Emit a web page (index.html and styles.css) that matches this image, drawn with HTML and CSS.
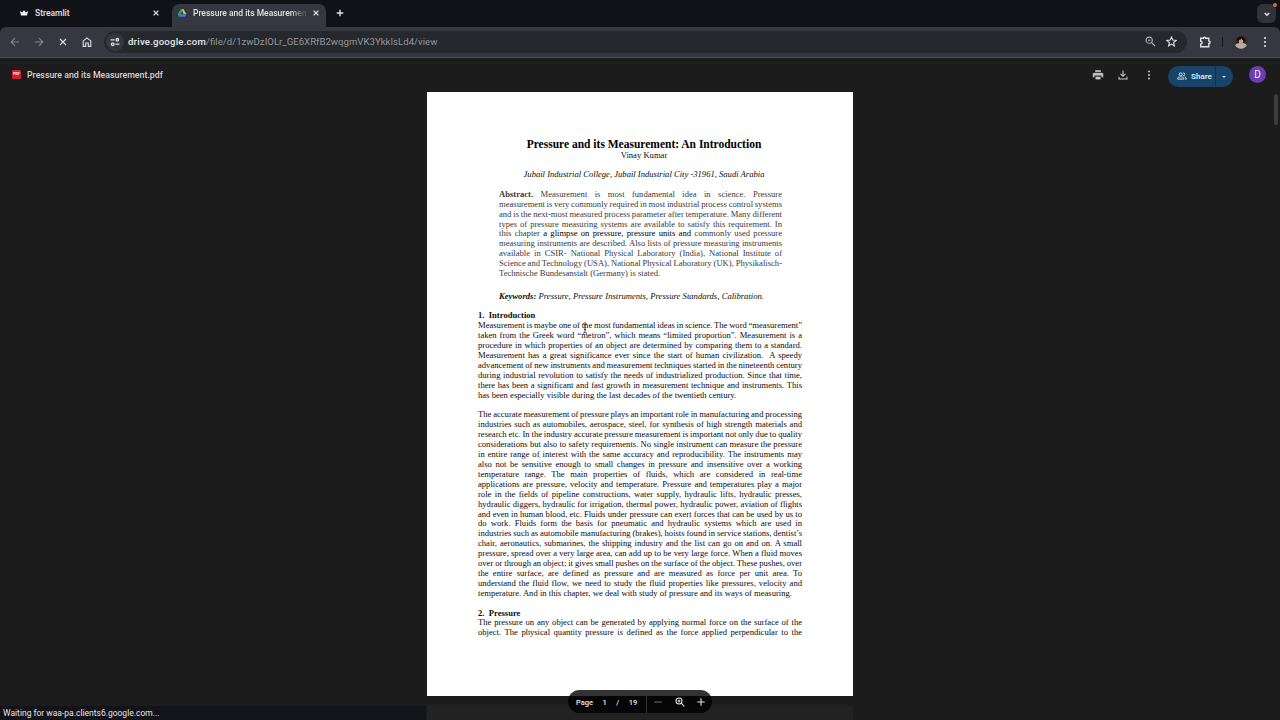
FILE: index.html
```
<!DOCTYPE html>
<html lang="en">
<head>
    <meta charset="UTF-8">
    <meta name="viewport" content="width=device-width, initial-scale=1.0">
    <title>Pressure and its Measurement.pdf</title>
    <link rel="stylesheet" href="styles.css">
</head>
<body>
    <!-- Tabs -->
    <div class="tabs">
        <div class="tab">
            <svg class="favicon" width="10" height="10" viewBox="0 0 10 10"><path d="M1 3l2.3 1.6L5 2l1.7 2.6L9 3 8 7.6H2z" fill="#f4f4f4"/></svg>
            <span class="tab-title">Streamlit</span>
            <svg class="close" width="6" height="6" viewBox="0 0 6 6"><path d="M.6.6l4.8 4.8M5.4.6L.6 5.4"/></svg>
        </div>
        <div class="tab active">
            <svg class="favicon" width="10" height="10" viewBox="0 0 10 10">
                <path d="M3.6 1.3h2.8L3.4 6.4 2 8.8.8 6.4z" fill="#35a26a"/>
                <path d="M4.8 1.3h1.8l2.8 5H6.6z" fill="#e5bd3f"/>
                <path d="M2 8.8l1.5-2.5h5.9L8 8.8z" fill="#3d7fe0"/>
            </svg>
            <span class="tab-title">Pressure and its Measuremen</span>
            <svg class="close" width="6" height="6" viewBox="0 0 6 6"><path d="M.6.6l4.8 4.8M5.4.6L.6 5.4"/></svg>
        </div>
        <svg class="new-tab" width="8" height="8" viewBox="0 0 8 8"><path d="M4 .7v6.6M.7 4h6.6"/></svg>
        <div class="tab-search">
            <svg width="8" height="8" viewBox="0 0 8 8"><path d="M1.8 3L4 5.2 6.2 3"/></svg>
            <i class="dot"></i>
        </div>
    </div>

    <!-- Address bar -->
    <div class="toolbar">
        <div class="nav">
            <svg class="dim" width="10" height="10" viewBox="0 0 10 10"><path d="M9 5H1.4M5 1.2L1.2 5 5 8.8"/></svg>
            <svg class="dim" width="10" height="10" viewBox="0 0 10 10"><path d="M1 5h7.6M5 1.2L8.8 5 5 8.8"/></svg>
            <svg width="10" height="10" viewBox="0 0 10 10"><path d="M2 2l6 6M8 2L2 8"/></svg>
            <svg width="10" height="10" viewBox="0 0 10 10"><path d="M1.2 9.4V3.9L5 .9l3.8 3V9.4H6.3V6H3.7v3.4z"/></svg>
        </div>
        <div class="address">
            <div class="site-info">
                <svg width="10" height="10" viewBox="0 0 10 10"><path d="M.6 2.8h4M5.4 7.2h4"/><circle cx="7.3" cy="2.8" r="1.3"/><circle cx="2.7" cy="7.2" r="1.3"/></svg>
            </div>
            <span class="url"><b>drive.google.com</b>/file/d/1zwDzIOLr_GE6XRfB2wqgmVK3YkkIsLd4/view</span>
            <svg class="zoom-icon" width="11" height="11" viewBox="0 0 11 11"><circle cx="4.2" cy="4.2" r="3.1"/><path d="M6.5 6.5l3.5 3.5M2.9 4.2h2.6"/></svg>
            <svg width="11" height="11" viewBox="0 0 11 11"><path d="M5.5 1l1.3 3.1 3.4.3-2.6 2.2.8 3.3-2.9-1.8-2.9 1.8.8-3.3L.8 4.4l3.4-.3z"/></svg>
        </div>
        <svg class="ext" width="12" height="12" viewBox="0 0 12 12"><path d="M1.7 2.3h2.7a1.1 1.1 0 0 1 2.2 0h3.2v2.6a1.3 1.3 0 0 1 0 2.6v3.3H1.7V8.1a1.4 1.4 0 0 0 0-2.9z"/></svg>
        <i class="sep"></i>
        <svg class="profile" width="14" height="14" viewBox="0 0 14 14">
            <circle cx="7" cy="7" r="6.8" fill="#37302b"/>
            <path d="M1.1 10.2C2.5 8.3 4 8 7 8s4.8.6 5.9 2.3A6.8 6.8 0 0 1 1.1 10.2z" fill="#b9aca5"/>
            <path d="M2.6 6Q3 1.5 7.2 1.5T11.5 6L10 8H4z" fill="#15110f"/>
            <ellipse cx="7" cy="6.5" rx="2.2" ry="2.9" fill="#c79d7f"/>
            <path d="M4.6 5Q7 5 7.3 3.5 8 5 9.5 5.3V3L7 2 4.6 3z" fill="#15110f"/>
        </svg>
        <svg class="menu" width="4" height="12" viewBox="0 0 4 12"><circle cx="2" cy="2" r="1.1"/><circle cx="2" cy="6" r="1.1"/><circle cx="2" cy="10" r="1.1"/></svg>
    </div>

    <!-- Drive viewer -->
    <div class="viewer">
        <div class="viewer-bar">
            <div class="pdf-icon">PDF</div>
            <span class="file-name">Pressure and its Measurement.pdf</span>
            <svg class="print" width="12" height="10" viewBox="0 0 12 10"><path d="M3 0h6v2.2H3zM1.8 2.7h8.4q1.2 0 1.2 1.2v3.5H9.3V5.8H2.7v1.6H.6V3.9q0-1.2 1.2-1.2z"/><path d="M3.3 6.4h5.4v3.2H3.3z"/></svg>
            <svg class="download" width="10" height="10" viewBox="0 0 10 10"><path d="M5 .5v5.6M2.5 3.8L5 6.3l2.5-2.5M1 6.8v2.2h8V6.8"/></svg>
            <svg class="more" width="4" height="10" viewBox="0 0 4 10"><circle cx="2" cy="1.5" r="1"/><circle cx="2" cy="5" r="1"/><circle cx="2" cy="8.5" r="1"/></svg>
            <div class="share">
                <div class="share-main">
                    <svg width="10" height="8" viewBox="0 0 10 8"><circle cx="3.7" cy="2.3" r="1.5"/><path d="M.7 7.1V6.3C.7 4.4 6.7 4.4 6.7 6.3v.8zM6.2.8a1.5 1.5 0 0 1 0 3M7.6 4.9c1.2.4 1.7.8 1.7 2.2H8"/></svg>
                    Share
                </div>
                <div class="share-more"></div>
            </div>
            <div class="avatar">D</div>
        </div>

        <div class="page">
            <h1>Pressure and its Measurement: An Introduction</h1>
            <div class="author">Vinay Kumar</div>
            <div class="college">Jubail Industrial College, Jubail Industrial City -31961, Saudi Arabia</div>

            <p class="abstract">
                <b>Abstract.</b> Measurement is most fundamental idea in science. Pressure<br>
                measurement is very commonly required in most industrial process control systems<br>
                and is the next-most measured process parameter after temperature. Many different<br>
                types of pressure measuring systems are available to satisfy this requirement. In<br>
                this chapter <span class="dark">a glimpse on pressure, pressure units and</span> commonly used pressure<br>
                measuring instruments are described. Also lists of pressure measuring instruments<br>
                available in CSIR- National Physical Laboratory (India), National Institute of<br>
                Science and Technology (USA), National Physical Laboratory (UK), Physikalisch-<br>
                <span class="last">Technische Bundesanstalt (Germany) is stated.</span>
            </p>

            <div class="keywords"><b>Keywords:</b> Pressure, Pressure Instruments, Pressure Standards, Calibration.</div>

            <h2>1.&nbsp; Introduction</h2>
            <p>
                Measurement is maybe one of the most fundamental ideas in science. The word “measurement”<br>
                taken from the Greek word “metron”, which means “limited proportion”. Measurement is a<br>
                procedure in which properties of an object are determined by comparing them to a standard.<br>
                Measurement has a great significance ever since the start of human civilization.&nbsp; A speedy<br>
                advancement of new instruments and measurement techniques started in the nineteenth century<br>
                during industrial revolution to satisfy the needs of industrialized production. Since that time,<br>
                there has been a significant and fast growth in measurement technique and instruments. This<br>
                <span class="last">has been especially visible during the last decades of the twentieth century.</span>
            </p>
            <p>
                The accurate measurement of pressure plays an important role in manufacturing and processing<br>
                industries such as automobiles, aerospace, steel, for synthesis of high strength materials and<br>
                research etc. In the industry accurate pressure measurement is important not only due to quality<br>
                considerations but also to safety requirements. No single instrument can measure the pressure<br>
                in entire range of interest with the same accuracy and reproducibility. The instruments may<br>
                also not be sensitive enough to small changes in pressure and insensitive over a working<br>
                temperature range. The main properties of fluids, which are considered in real-time<br>
                applications are pressure, velocity and temperature. Pressure and temperatures play a major<br>
                role in the fields of pipeline constructions, water supply, hydraulic lifts, hydraulic presses,<br>
                hydraulic diggers, hydraulic for irrigation, thermal power, hydraulic power, aviation of flights<br>
                and even in human blood, etc. Fluids under pressure can exert forces that can be used by us to<br>
                do work. Fluids form the basis for pneumatic and hydraulic systems which are used in<br>
                industries such as automobile manufacturing (brakes), hoists found in service stations, dentist’s<br>
                chair, aeronautics, submarines, the shipping industry and the list can go on and on. A small<br>
                pressure, spread over a very large area, can add up to be very large force. When a fluid moves<br>
                over or through an object; it gives small pushes on the surface of the object. These pushes, over<br>
                the entire surface, are defined as pressure and are measured as force per unit area. To<br>
                understand the fluid flow, we need to study the fluid properties like pressures, velocity and<br>
                <span class="last">temperature. And in this chapter, we deal with study of pressure and its ways of measuring.</span>
            </p>
            <h2>2.&nbsp; Pressure</h2>
            <p>
                The pressure on any object can be generated by applying normal force on the surface of the<br>
                object. The physical quantity pressure is defined as the force applied perpendicular to the
            </p>
        </div>
        <div class="page next"></div>

        <div class="scrollbar"></div>
        <div class="page-controls">
            <div class="page-number">
                <span>Page</span>
                <span>1</span>
                <span>/</span>
                <span>19</span>
            </div>
            <div class="page-zoom">
                <svg class="dim" width="8" height="10" viewBox="0 0 8 10"><path d="M.3 5h7.4"/></svg>
                <svg width="10" height="10" viewBox="0 0 10 10"><circle cx="4" cy="4" r="3"/><path d="M6.2 6.2L9.3 9.3M2.6 4h2.8M4 2.6v2.8"/></svg>
                <svg width="8" height="10" viewBox="0 0 8 10"><path d="M.3 5h7.4M4 1.3v7.4"/></svg>
            </div>
        </div>
        <div class="status">Waiting for waa-pa.clients6.google.com...</div>
        <svg class="cursor" width="6" height="11" viewBox="0 0 6 11"><path d="M1 .8q2 0 2 1.2Q3 .8 5 .8M3 2v7M1 10.2Q3 10.2 3 9q0 1.2 2 1.2M2 6.5h2"/></svg>
    </div>
</body>
</html>
```
FILE: styles.css
```
* {
    box-sizing: border-box;
}
body {
    margin: 0;
    height: 720px;
    overflow: hidden;
    display: flex;
    flex-direction: column;
    background: #111217;
    color: #e3e3e3;
    font-family: Roboto, "Liberation Sans", sans-serif;
    font-size: 9px;
}
svg {
    flex: none;
    fill: none;
    stroke: #dfe1e5;
    stroke-width: 1.1;
}
.favicon, .profile {
    stroke: none;
}
.dim {
    opacity: 0.45;
}

/* tabs */
.tabs {
    height: 27px;
    flex: none;
    display: flex;
    align-items: flex-start;
    padding-left: 12px;
}
.tab {
    width: 159px;
    height: 23px;
    margin-top: 4px;
    padding: 0 12px 5px 7px;
    display: flex;
    align-items: center;
    gap: 6px;
}
.tab:first-child {
    margin-right: 1px;
}
.tab.active {
    width: 154px;
    padding-left: 5px;
    padding-right: 7px;
    background: #353840;
    border-radius: 7px 7px 0 0;
}
.tab-title {
    flex: 1;
    white-space: nowrap;
    font-weight: 500;
    font-size: 8.5px;
}
.active .tab-title {
    -webkit-mask-image: linear-gradient(to right, #000 86%, rgba(0, 0, 0, 0.2) 96%);
    mask-image: linear-gradient(to right, #000 86%, rgba(0, 0, 0, 0.2) 96%);
}
.close {
    stroke-width: 1.3;
}
.new-tab {
    margin: 9px 0 0 10px;
    stroke-width: 1.4;
}
.tab-search {
    position: relative;
    width: 19px;
    height: 19px;
    margin: 4px 4px 0 auto;
    border-radius: 6px;
    background: #30333a;
    display: flex;
    align-items: center;
    justify-content: center;
}
.tab-search svg {
    stroke-width: 1.6;
}
.dot {
    position: absolute;
    top: -1px;
    right: -1px;
    width: 4px;
    height: 4px;
    border-radius: 50%;
    background: #c07a2c;
}

/* address bar */
.toolbar {
    height: 31px;
    flex: none;
    display: flex;
    align-items: center;
    background: #353840;
    border-bottom: 1px solid #4a4d58;
    border-radius: 6px 6px 0 0;
    padding: 0 13px 1px 10px;
}
.nav {
    display: flex;
    gap: 14px;
}
.address {
    flex: 1;
    height: 22px;
    margin: 0 12px 0 12px;
    padding: 0 10px 0 2px;
    border-radius: 11px;
    background: #25282c;
    display: flex;
    align-items: center;
}
.site-info {
    width: 18px;
    height: 18px;
    border-radius: 50%;
    background: #34373d;
    display: flex;
    align-items: center;
    justify-content: center;
}
.site-info svg {
    stroke-width: 1.3;
}
.url {
    flex: 1;
    margin-left: 4px;
    font-size: 9.65px;
    color: #94979c;
}
.url b {
    font-weight: 500;
    letter-spacing: 0.2px;
    color: #e6e8eb;
}
.zoom-icon {
    margin-right: 10px;
    opacity: 0.75;
}
.ext {
    stroke-width: 1.4;
}
.sep {
    width: 1px;
    height: 10px;
    margin: 0 11px;
    background: #17181c;
}
.menu {
    margin-left: 15px;
    fill: #e3e3e3;
    stroke: none;
}

/* viewer */
.viewer {
    position: relative;
    flex: 1;
    overflow: hidden;
    background: #1c1c1c;
}
.viewer-bar {
    height: 33px;
    margin-bottom: 1px;
    display: flex;
    align-items: center;
    padding: 0 14px 0 12px;
}
.pdf-icon {
    width: 9px;
    height: 9px;
    border-radius: 1px;
    background: #d3202f;
    color: #fff;
    font-size: 3.5px;
    font-weight: 700;
    line-height: 9px;
    text-align: center;
}
.file-name {
    flex: 1;
    margin-left: 6px;
    font-size: 8.8px;
    font-weight: 500;
    color: #d4d4d4;
}
.print {
    fill: #c7c7c7;
    stroke: #1c1c1c;
    stroke-width: 0.4;
}
.download {
    margin: 0 19px 0 14px;
    stroke: #c7c7c7;
}
.more {
    fill: #c7c7c7;
    stroke: none;
}
.share {
    display: flex;
    width: 65px;
    height: 21px;
    margin: 3px 16px 0 17px;
    border-radius: 11px;
    overflow: hidden;
    background: #174468;
    color: #c5e4fb;
    font-weight: 700;
    font-size: 8px;
}
.share svg {
    stroke: #c5e4fb;
    stroke-width: 1;
}
.share-main {
    width: 48px;
    padding-left: 9px;
    display: flex;
    align-items: center;
    gap: 4px;
    border-right: 1px solid #15334b;
}
.share-more {
    flex: 1;
}
.share-more::after {
    content: "";
    display: block;
    margin: 10px 0 0 6px;
    width: 0;
    border: 2px solid transparent;
    border-top-color: #c5e4fb;
}
.avatar {
    width: 17px;
    height: 17px;
    border-radius: 50%;
    background: #6a3fb0;
    color: #eee;
    font-size: 10px;
    line-height: 17px;
    text-align: center;
}

/* document */
.page {
    width: 426px;
    height: 604px;
    margin: 0 auto 0 427px;
    padding: 46px 51px 0 51px;
    background: #fff;
    color: #0c0c0c;
    font-family: "Liberation Serif", "Times New Roman", serif;
    font-size: 8.6px;
    line-height: 9.91px;
    white-space: nowrap;
}
.page.next {
    margin-top: 9px;
    background: #222;
}
.page h1 {
    margin: 0 0 1px 8px;
    font-size: 11.5px;
    line-height: 12px;
    text-align: center;
    color: #000;
}
.page h2 {
    margin: 0;
    font-size: 8.6px;
}
.page p {
    margin: 0 0 9.91px;
    text-align: justify;
    text-align-last: justify;
    word-spacing: -0.5px;
}
.page .last {
    display: block;
    text-align-last: left;
    word-spacing: 0.05px;
}
.author, .college {
    margin-left: 8px;
    text-align: center;
}
.college {
    margin-top: 9.5px;
    font-style: italic;
}
.page .abstract {
    margin: 9.5px 20px 13px 21px;
    color: #3a3a3a;
}
.abstract .dark {
    color: #000;
}
.keywords {
    margin: 0 0 9.5px 21px;
    font-style: italic;
    word-spacing: 0.2px;
}

/* overlays */
.scrollbar {
    position: absolute;
    top: 36px;
    right: 2px;
    width: 4px;
    height: 31px;
    border-radius: 2px;
    background: #3d3d3d;
}
.page-controls {
    position: absolute;
    left: 568px;
    bottom: 7px;
    width: 144px;
    height: 23px;
    border-radius: 12px;
    background: rgba(0, 0, 0, 0.8);
    color: #e8e8e8;
    display: flex;
    align-items: center;
    font-size: 7.5px;
    font-weight: 500;
}
.page-number {
    width: 79px;
    height: 23px;
    padding: 1px 0 0 8px;
    display: flex;
    align-items: center;
    gap: 9.5px;
    border-right: 1px solid #333;
}
.page-zoom {
    flex: 1;
    display: flex;
    justify-content: space-between;
    padding: 0 7px 0 7px;
}
.status {
    position: absolute;
    left: 0;
    bottom: 0;
    width: 426px;
    height: 14px;
    padding-left: 3px;
    background: #131419;
    font-size: 8.5px;
    line-height: 14px;
    white-space: nowrap;
}
.cursor {
    position: absolute;
    left: 582px;
    top: 265px;
    stroke: #222;
    stroke-width: 0.8;
}
```
